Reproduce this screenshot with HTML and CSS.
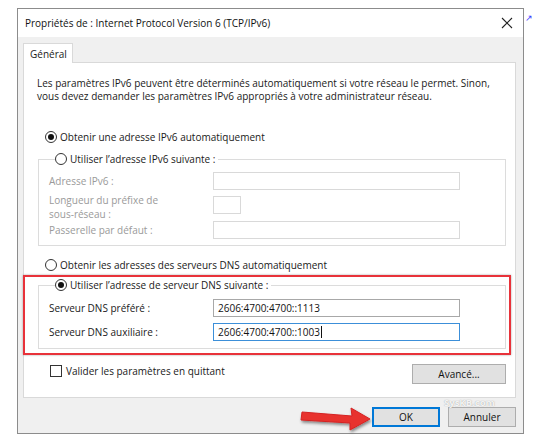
FILE: index.html
```html
<!DOCTYPE html>
<html lang="fr">
<head>
<meta charset="utf-8">
<link rel="stylesheet" href="styles.css">
</head>
<body>
<div class="window">
  <div class="titlebar">
    <span class="title">Propriétés de : Internet Protocol Version 6 (TCP/IPv6)</span>
    <svg class="close" width="12" height="12" viewBox="0 0 12 12"><path d="M1 1L11 11M11 1L1 11" stroke="#222" stroke-width="1.1" fill="none"/></svg>
  </div>
  <div class="body">
    <div class="tabs"><div class="tab">Général</div></div>
    <div class="panel">
      <p class="desc">Les paramètres IPv6 peuvent être déterminés automatiquement si votre réseau le permet. Sinon,<br>vous devez demander les paramètres IPv6 appropriés à votre administrateur réseau.</p>
      <div class="option first"><span class="radio checked"></span><span>Obtenir une adresse IPv6 automatiquement</span></div>
      <fieldset class="group ipgroup">
        <legend><span class="radio"></span><span>Utiliser l’adresse IPv6 suivante :</span></legend>
        <div class="field f1"><span class="lbl dis">Adresse IPv6 :</span><span class="input dis-input"></span></div>
        <div class="field tall"><span class="lbl dis">Longueur du préfixe de<br>sous-réseau :</span><span class="input dis-input small"></span></div>
        <div class="field"><span class="lbl dis">Passerelle par défaut :</span><span class="input dis-input"></span></div>
      </fieldset>
      <div class="option dnsauto"><span class="radio"></span><span>Obtenir les adresses des serveurs DNS automatiquement</span></div>
      <fieldset class="group dnsgroup">
        <legend><span class="radio checked"></span><span>Utiliser l’adresse de serveur DNS suivante :</span></legend>
        <div class="field f1"><span class="lbl">Serveur DNS préféré :</span><span class="input en">2606:4700:4700::1113</span></div>
        <div class="field second"><span class="lbl">Serveur DNS auxiliaire :</span><span class="input en focus">2606:4700:4700::1003<span class="caret"></span></span></div>
      </fieldset>
      <div class="bottomrow">
        <div class="check"><span class="box"></span><span>Valider les paramètres en quittant</span></div>
        <div class="btn advanced">Avancé...</div>
      </div>
    </div>
    <div class="footer">
      <div class="btn ok">OK</div>
      <div class="btn">Annuler</div>
    </div>
  </div>
  <div class="highlight"></div>
  <svg class="arrow" width="84" height="32" viewBox="0 0 84 32">
    <defs><filter id="sh" x="-20%" y="-40%" width="140%" height="180%"><feDropShadow dx="1" dy="2" stdDeviation="1.5" flood-color="#000" flood-opacity="0.45"/></filter></defs>
    <path d="M6 9 L56 13 L55 5 L74 16 L54 27 L54 20 L5 17 Z" fill="#e8312f" stroke="#d42424" stroke-width="1" stroke-linejoin="round" filter="url(#sh)"/>
  </svg>
  <span class="watermark">SysKB.com</span>
</div>
<span class="corner">↗</span>
</body>
</html>
```

FILE: styles.css
```css
* { box-sizing: border-box; }
html, body { margin: 0; padding: 0; background: #fff; }
body {
  width: 554px; height: 444px; overflow: hidden;
  font-family: "Open Sans", "Noto Sans", sans-serif;
  font-size: 10px; color: #1a1a1a;
  padding: 8px 0 0 17px;
  position: relative;
}
.window {
  position: relative;
  width: 507px; height: 426px;
  border: 1px solid #8c8c8c;
  background: #f0f0f0;
  display: flex; flex-direction: column;
}
.titlebar {
  height: 28px; background: #fff;
  display: flex; align-items: center; justify-content: space-between;
  padding: 0 10px 0 7px;
}
.title { font-size: 10px; color: #111; }
.close { display: block; }
.body { flex: 1; padding: 6px 7px 0 5px; display: flex; flex-direction: column; }
.tabs { display: flex; height: 19px; }
.tab {
  width: 50px; height: 20px; background: #fff;
  border: 1px solid #d9d9d9; border-bottom: none;
  padding: 3px 0 0 6px; position: relative; z-index: 1;
}
.panel {
  height: 336px; flex: none; background: #fff; border: 1px solid #d9d9d9;
  padding: 14px 9px 0 13px;
  display: flex; flex-direction: column;
}
.desc { margin: 0; line-height: 13px; flex: none; }
.option { display: flex; align-items: center; height: 14px; margin-left: 8px; flex: none; }
.option.first { margin-top: 27px; }
.option.dnsauto { margin-top: 12px; }
.radio {
  width: 12px; height: 12px; border-radius: 50%;
  border: 1px solid #333; background: #fff;
  display: inline-flex; align-items: center; justify-content: center;
  margin-right: 3px; flex: none;
}
.radio.checked::after {
  content: ""; width: 6px; height: 6px; border-radius: 50%; background: #111;
}
.group {
  margin: 8px 0 0 1px; padding: 0 0 6px 10px;
  border: 1px solid #dcdcdc; min-width: 0; flex: none;
}
.group legend {
  display: flex; align-items: center; height: 14px;
  padding: 0 3px 0 0; margin-left: 6px;
}
.field { display: flex; align-items: center; height: 18px; margin-top: 3px; }
.field.f1 { margin-top: 6px; }
.field.tall { height: 25px; align-items: flex-start; }
.field.tall .lbl { line-height: 14px; }
.field.tall .input { margin-top: 3px; }
.lbl { width: 164px; flex: none; }
.lbl.dis { color: #9a9a9a; }
.input {
  width: 247px; height: 18px; border: 1px solid #d9d9d9; background: #fff;
  display: flex; align-items: center; padding-left: 4px; flex: none;
}
.input.small { width: 28px; }
.input.en { border-color: #a8a8a8; color: #111; }
.input.focus { border-color: #3c8fd9; }
.caret { display: inline-block; width: 1px; height: 12px; background: #111; margin-left: 1px; }
.dnsgroup { margin-top: 6px; padding-bottom: 7px; }
.dnsgroup .field.f1 { margin-top: 7px; }
.dnsgroup .field.second { margin-top: 6px; }
.bottomrow {
  margin-top: 15px; height: 20px; flex: none;
  display: flex; align-items: flex-start; justify-content: space-between;
}
.check { display: flex; align-items: center; margin-left: 13px; height: 12px; margin-top: 1px; }
.box { width: 12px; height: 12px; border: 1px solid #333; background: #fff; margin-right: 4px; }
.btn {
  height: 20px; background: #e1e1e1; border: 1px solid #adadad;
  display: flex; align-items: center; justify-content: center; color: #111;
}
.advanced { width: 94px; }
.footer {
  margin-top: 9px; display: flex; justify-content: flex-end; gap: 8px;
}
.footer .btn { width: 68px; height: 20px; }
.footer .ok { border: 1px solid #0078d7; box-shadow: inset 0 0 0 1px #0078d7; }
.highlight {
  position: absolute; left: 5px; top: 266px; width: 488px; height: 80px;
  border: 2px solid #e8323a; box-shadow: 0 0 2px rgba(0,0,0,.35);
  pointer-events: none;
}
.arrow { position: absolute; left: 278px; top: 394px; }
.watermark {
  position: absolute; left: 426px; top: 389px; line-height: 10px;
  font-size: 9.5px; font-weight: bold; color: rgba(255,255,255,.9);
  text-shadow: 0 0 1px rgba(110,110,110,.7);
}
.corner { position: absolute; left: 525px; top: 11px; font-size: 9px; color: #3a3aff; }
```
